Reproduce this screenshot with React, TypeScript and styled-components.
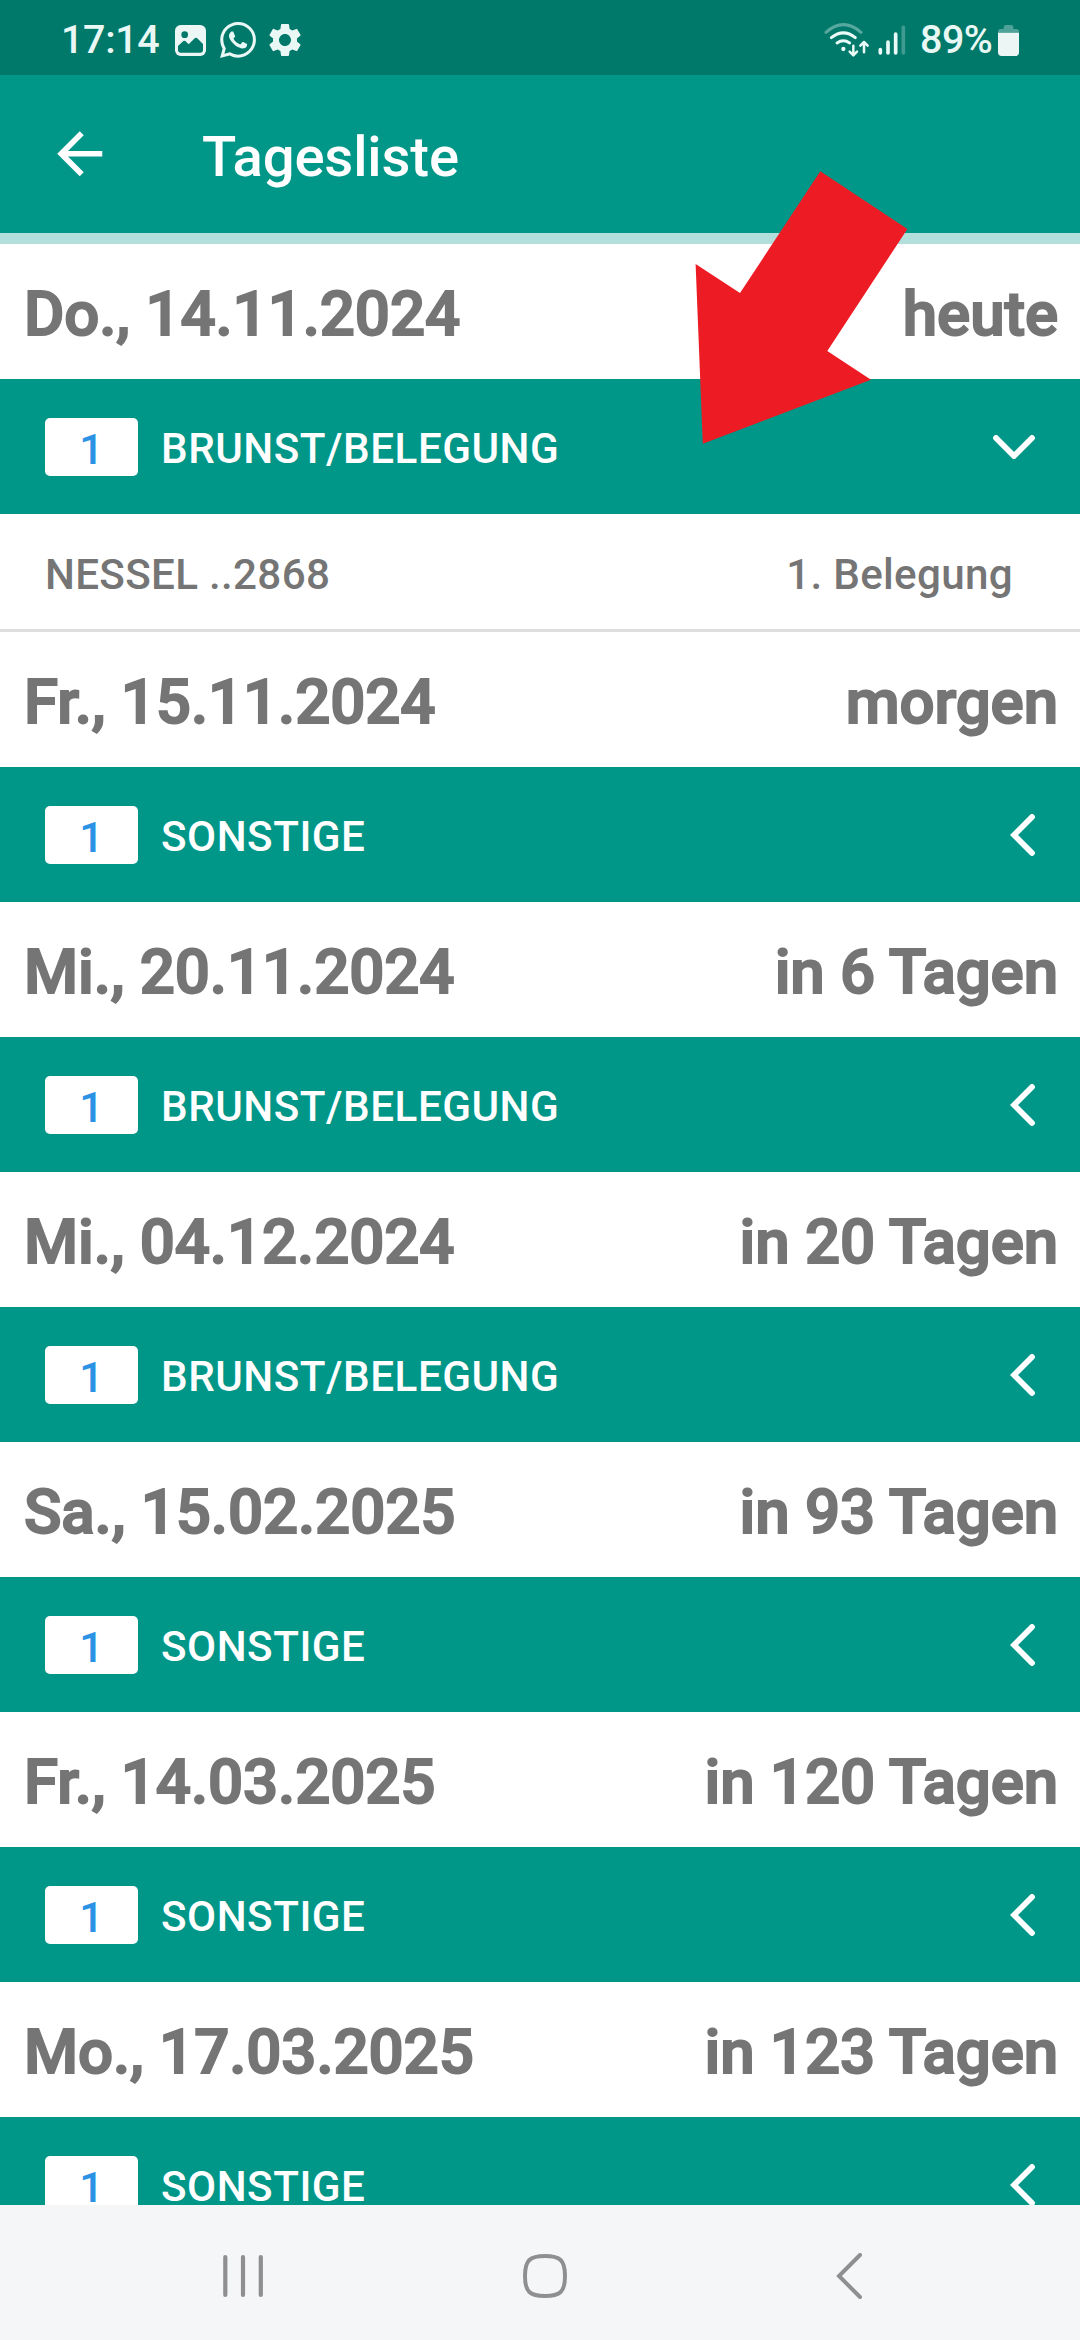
import React from 'react';
import styled, { createGlobalStyle } from 'styled-components';
import { MdSettings } from 'react-icons/md';
import { SiWhatsapp } from 'react-icons/si';

const GlobalStyle = createGlobalStyle`
  * { box-sizing: border-box; }
  html, body { margin: 0; padding: 0; }
  body { font-family: Roboto, "Noto Sans", sans-serif; background: #fff; }
  svg { display: block; flex: none; }
`;

const Screen = styled.div`
  position: relative;
  width: 1080px;
  height: 2340px;
  display: flex;
  flex-direction: column;
  overflow: hidden;
  background: #fff;
`;

const StatusBar = styled.header`
  flex: none;
  height: 75px;
  padding: 5px 61px 0 61px;
  display: flex;
  align-items: center;
  justify-content: space-between;
  background: #00796b;
  color: #e9f8f5;
`;

const StatusGroup = styled.div`
  display: flex;
  align-items: center;
`;

const StatusText = styled.span<{ $spacing: number; $width: number }>`
  width: ${(p) => p.$width}px;
  font-size: 39.4px;
  font-weight: 500;
  line-height: 46px;
  letter-spacing: ${(p) => p.$spacing}px;
  white-space: nowrap;
`;

const IconSlot = styled.span<{ $width: number; $left: number }>`
  width: ${(p) => p.$width}px;
  margin-left: ${(p) => p.$left}px;
  display: flex;
  justify-content: center;
`;

const AppBar = styled.div`
  flex: none;
  height: 158px;
  padding-left: 45.5px;
  display: flex;
  align-items: center;
  gap: 89px;
  background: #009688;
  color: #fff;
`;

const Title = styled.h1`
  margin: 5px 0 0;
  font-size: 56.25px;
  font-weight: 500;
  letter-spacing: -0.15px;
  line-height: 66px;
`;

const Stripe = styled.div`
  flex: none;
  height: 11px;
  background: #b2dfdb;
`;

const List = styled.main`
  flex: 1;
  min-height: 0;
  overflow: hidden;
`;

const DateRow = styled.div`
  height: 135px;
  padding: 5px 22px 0 24px;
  display: flex;
  align-items: center;
  justify-content: space-between;
  color: #757575;
  font-size: 61.875px;
  font-weight: 500;
  letter-spacing: -0.1px;
  -webkit-text-stroke: 1.93px #757575;
  line-height: 76px;
  white-space: nowrap;
`;

const GroupRow = styled.div`
  height: 135px;
  padding: 0 45px;
  display: flex;
  align-items: center;
  background: #009688;
  color: #fff;
`;

const Badge = styled.span`
  width: 93px;
  height: 58px;
  padding-top: 4px;
  display: flex;
  align-items: center;
  justify-content: center;
  border-radius: 5px;
  background: #fff;
  color: #2b92e6;
  font-size: 43px;
  font-weight: 500;
  line-height: 50px;
`;

const GroupName = styled.span`
  flex: 1;
  margin: 4px 0 0 23px;
  font-size: 42.2px;
  font-weight: 500;
  letter-spacing: 0.52px;
  line-height: 50px;
`;

const DetailRow = styled.div`
  height: 118px;
  padding: 6px 67px 0 45px;
  display: flex;
  align-items: center;
  justify-content: space-between;
  border-bottom: 3px solid #dedede;
  color: #757575;
  font-size: 42.2px;
  font-weight: 500;
  letter-spacing: 0.3px;
  line-height: 50px;
`;

const NavBar = styled.nav`
  flex: none;
  height: 135px;
  padding: 7px 218px 0 221px;
  display: flex;
  align-items: center;
  background: #f5f6f8;
`;

const HomeButton = styled.span`
  margin: 0 268.5px 0 258px;
`;

const Pointer = styled.svg`
  position: absolute;
  left: 690px;
  top: 165px;
`;

const PictureIcon = () => (
  <svg width="31" height="31" viewBox="0 0 93 93">
    <rect width="93" height="93" rx="17" fill="#ecf7f5" />
    <circle cx="29" cy="29" r="10" fill="#00796b" />
    <path d="M9 63 L25 48 Q28 46 31 48 L41 58 L60 39 Q63 37 66 39 L84 57 V76 Q84 83 77 83 H16 Q9 83 9 76 Z" fill="#00796b" />
  </svg>
);

const WifiIcon = () => (
  <svg width="46" height="36" viewBox="70 68 138 108" fill="none" stroke="#e9faf7" strokeWidth="9" strokeLinecap="round">
    <path d="M76 99 Q128 53 181 99" stroke="#57a89e" />
    <path d="M92 115 Q128 86 164 115" />
    <path d="M109 131 Q128 118 147 131" />
    <circle cx="128" cy="149" r="6.5" fill="#e9faf7" stroke="none" />
    <g strokeWidth="7.5" strokeLinejoin="round">
      <path d="M158 139 V167 M147 157 L158 168 L169 157" />
      <path d="M190 159 V129 M179 139 L190 128 L201 139" />
    </g>
  </svg>
);

const SignalIcon = () => (
  <svg width="28" height="32" viewBox="233 73 84 96" stroke="#e9faf7" strokeWidth="11" strokeLinecap="round">
    <path d="M240 150 V160 M263 127 V160 M286 103 V160" />
    <path d="M309 83 V160" stroke="#3f9a8f" />
  </svg>
);

const BatteryIcon = () => (
  <svg width="21" height="31" viewBox="594 75 63 93">
    <path d="M594 98 V95 Q594 87 602 87 H611 V82 Q611 75 618 75 H633 Q640 75 640 82 V87 H649 Q657 87 657 95 V98 Z" fill="#4fa298" />
    <path d="M594 98 H657 V157 Q657 168 646 168 H605 Q594 168 594 157 Z" fill="#ecf7f5" />
  </svg>
);

const BackArrow = () => (
  <svg width="67.5" height="67.5" viewBox="0 0 24 24" fill="#fff">
    <path d="M20 11H7.83l5.59-5.59L12 4l-8 8 8 8 1.41-1.41L7.83 13H20v-2z" />
  </svg>
);

const Chevron = ({ open }: { open: boolean }) =>
  open ? (
    <svg width="42" height="24" viewBox="0 0 42 24" fill="none" stroke="#fff" strokeWidth="5.8" strokeLinecap="round">
      <path d="M3 3 L21 21 L39 3" />
    </svg>
  ) : (
    <svg width="25" height="42" viewBox="0 0 25 42" fill="none" stroke="#fff" strokeWidth="5.8" strokeLinecap="round">
      <path d="M22 3 L4 21 L22 39" />
    </svg>
  );

type Day = {
  date: string;
  when: string;
  group: string;
  items?: { animal: string; event: string }[];
};

const days: Day[] = [
  { date: 'Do., 14.11.2024', when: 'heute', group: 'BRUNST/BELEGUNG', items: [{ animal: 'NESSEL ..2868', event: '1. Belegung' }] },
  { date: 'Fr., 15.11.2024', when: 'morgen', group: 'SONSTIGE' },
  { date: 'Mi., 20.11.2024', when: 'in 6 Tagen', group: 'BRUNST/BELEGUNG' },
  { date: 'Mi., 04.12.2024', when: 'in 20 Tagen', group: 'BRUNST/BELEGUNG' },
  { date: 'Sa., 15.02.2025', when: 'in 93 Tagen', group: 'SONSTIGE' },
  { date: 'Fr., 14.03.2025', when: 'in 120 Tagen', group: 'SONSTIGE' },
  { date: 'Mo., 17.03.2025', when: 'in 123 Tagen', group: 'SONSTIGE' },
];

export default function App() {
  return (
    <Screen>
      <GlobalStyle />
      <StatusBar>
        <StatusGroup>
          <StatusText $spacing={-0.3} $width={98}>17:14</StatusText>
          <IconSlot $width={31} $left={16}><PictureIcon /></IconSlot>
          <IconSlot $width={36} $left={14}><SiWhatsapp size={36} /></IconSlot>
          <IconSlot $width={40} $left={9}><MdSettings size={40} /></IconSlot>
        </StatusGroup>
        <StatusGroup>
          <IconSlot $width={46} $left={0}><WifiIcon /></IconSlot>
          <IconSlot $width={28} $left={8}><SignalIcon /></IconSlot>
          <IconSlot $width={14} $left={0} />
          <StatusText $spacing={-0.5} $width={73}>89%</StatusText>
          <IconSlot $width={21} $left={5}><BatteryIcon /></IconSlot>
        </StatusGroup>
      </StatusBar>
      <AppBar>
        <BackArrow />
        <Title>Tagesliste</Title>
      </AppBar>
      <Stripe />
      <List>
        {days.map((day) => (
          <section key={day.date}>
            <DateRow>
              <span>{day.date}</span>
              <span>{day.when}</span>
            </DateRow>
            <GroupRow>
              <Badge>1</Badge>
              <GroupName>{day.group}</GroupName>
              <Chevron open={!!day.items} />
            </GroupRow>
            {day.items?.map((item) => (
              <DetailRow key={item.animal}>
                <span>{item.animal}</span>
                <span>{item.event}</span>
              </DetailRow>
            ))}
          </section>
        ))}
      </List>
      <NavBar>
        <svg width="44" height="44" viewBox="0 0 44 44" stroke="#8f8f91" strokeWidth="4.2" strokeLinecap="round">
          <path d="M4.3 3 V41 M22 3 V41 M39.8 3 V41" />
        </svg>
        <HomeButton>
          <svg width="44" height="44" viewBox="0 0 44 44" fill="none" stroke="#8f8f91" strokeWidth="4">
            <path d="M22 2 C37 2 42 6 42 22 C42 38 37 42 22 42 C7 42 2 38 2 22 C2 6 7 2 22 2 Z" />
          </svg>
        </HomeButton>
        <svg width="27" height="46" viewBox="0 0 27 46" fill="none" stroke="#8f8f91" strokeWidth="4" strokeLinecap="round">
          <path d="M24 2 L3 23 L24 44" />
        </svg>
      </NavBar>
      <Pointer width="225" height="285" viewBox="690 165 225 285">
        <polygon points="820.3,171.3 907.4,229 827.3,351 871,379.7 702.8,443.7 695.6,264 740,293" fill="#ed1c24" />
      </Pointer>
    </Screen>
  );
}
